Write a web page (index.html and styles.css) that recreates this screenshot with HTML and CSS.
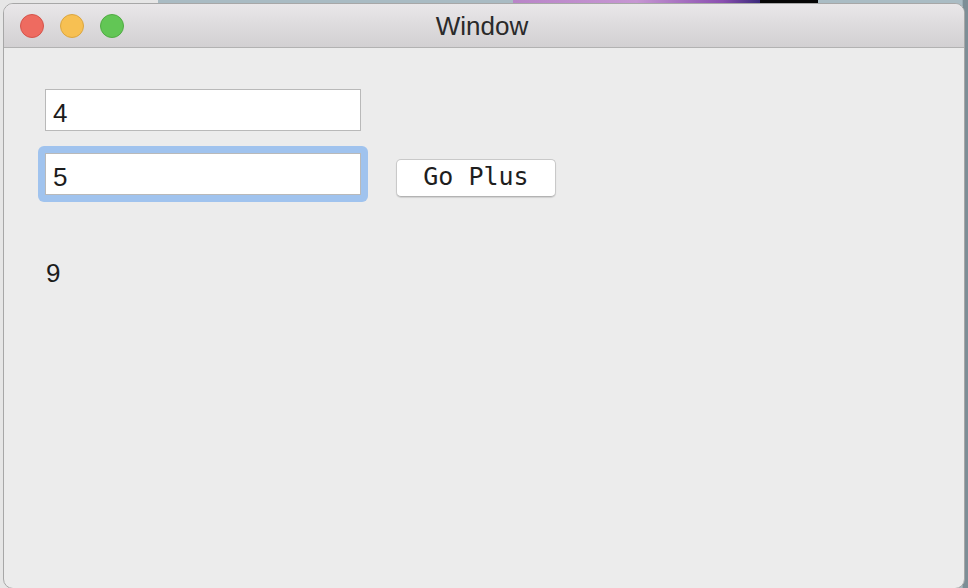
FILE: index.html
```html
<!DOCTYPE html>
<html>
<head>
<meta charset="utf-8">
<title>Window</title>
<link rel="stylesheet" href="styles.css">
</head>
<body>
<div class="desktop">
  <div class="seg seg-light"></div>
  <div class="seg seg-blue1"></div>
  <div class="seg seg-photo"></div>
  <div class="seg seg-black"></div>
  <div class="seg seg-blue2"></div>
</div>
<div class="window">
  <div class="titlebar">
    <div class="lights">
      <span class="light red"></span>
      <span class="light yellow"></span>
      <span class="light green"></span>
    </div>
    <div class="title">Window</div>
    <div class="spacer"></div>
  </div>
  <div class="content">
    <input class="field" type="text" value="4">
    <div class="row">
      <div class="focus-ring"><input class="field" type="text" value="5"></div>
      <button class="btn">Go Plus</button>
    </div>
    <div class="result">9</div>
  </div>
</div>
</body>
</html>
```
FILE: styles.css
```css
html, body {
  margin: 0;
  padding: 0;
  width: 968px;
  height: 588px;
  overflow: hidden;
}
body {
  position: relative;
  font-family: "Liberation Sans", Arial, sans-serif;
}
.desktop {
  display: flex;
  height: 100%;
}
.seg { height: 100%; }
.seg-light { width: 158px; background: #e6e6e6; }
.seg-blue1 { width: 355px; background: #a9bbc3; }
.seg-photo { width: 247px; background: linear-gradient(90deg, #b985c8 0%, #c696d2 50%, #8a4fb0 85%, #3a2a7a 100%); }
.seg-black { width: 58px; background: #050505; }
.seg-blue2 { flex: 1; background: linear-gradient(90deg, #aabcc4 0%, #aabcc4 96%, #7d8e96 97%); }

.window {
  position: absolute;
  left: 3px;
  top: 3px;
  width: 962px;
  height: 586px;
  box-sizing: border-box;
  border: 1px solid #a7a7a7;
  border-radius: 10px;
  overflow: hidden;
  background: #ececec;
  display: flex;
  flex-direction: column;
}
.titlebar {
  height: 43px;
  flex: none;
  border-bottom: 1px solid #b2b2b2;
  background: linear-gradient(180deg, #e9e7e9 0%, #dcdadc 55%, #d2d0d2 100%);
  display: grid;
  grid-template-columns: 1fr auto 1fr;
  align-items: center;
}
.lights {
  display: flex;
  gap: 16px;
  padding-left: 16px;
  padding-top: 1px;
}
.light {
  width: 24px;
  height: 24px;
  box-sizing: border-box;
  border-radius: 50%;
  border: 1px solid transparent;
}
.red { background: #ee6b60; border-color: #d5544b; }
.yellow { background: #f7c052; border-color: #dba640; }
.green { background: #62c655; border-color: #50ab43; }
.title {
  font-size: 26px;
  color: #2a2a2a;
  padding-top: 1px;
  margin-left: -4px;
}
.content {
  flex: 1;
  padding: 41px 0 0 41px;
}
.field {
  display: block;
  box-sizing: border-box;
  width: 316px;
  height: 42px;
  margin: 0;
  padding: 7px 7px 0 7px;
  border: 1px solid #b9b9b9;
  border-radius: 0;
  background: #fff;
  font-family: "Liberation Sans", Arial, sans-serif;
  font-size: 26px;
  color: #1c1c1c;
  outline: none;
}
.row {
  display: flex;
  align-items: flex-start;
  margin-top: 22px;
}
.focus-ring {
  margin: -7px;
  padding: 7px;
  background: #a0c3ee;
  border-radius: 6px;
}
.btn {
  margin-left: 35px;
  margin-top: 6px;
  width: 160px;
  height: 38px;
  box-sizing: border-box;
  padding: 0 0 3px 0;
  background: #fff;
  border: 1px solid #c9c9c9;
  border-bottom-color: #b3b3b3;
  border-radius: 5px;
  box-shadow: 0 1px 1px rgba(0,0,0,0.12);
  font-family: "DejaVu Sans Mono", "Liberation Mono", monospace;
  font-size: 25px;
  color: #1e1e1e;
  line-height: 30px;
}
.result {
  margin-top: 61px;
  font-size: 26px;
  color: #1c1c1c;
  padding-left: 1px;
}
```
